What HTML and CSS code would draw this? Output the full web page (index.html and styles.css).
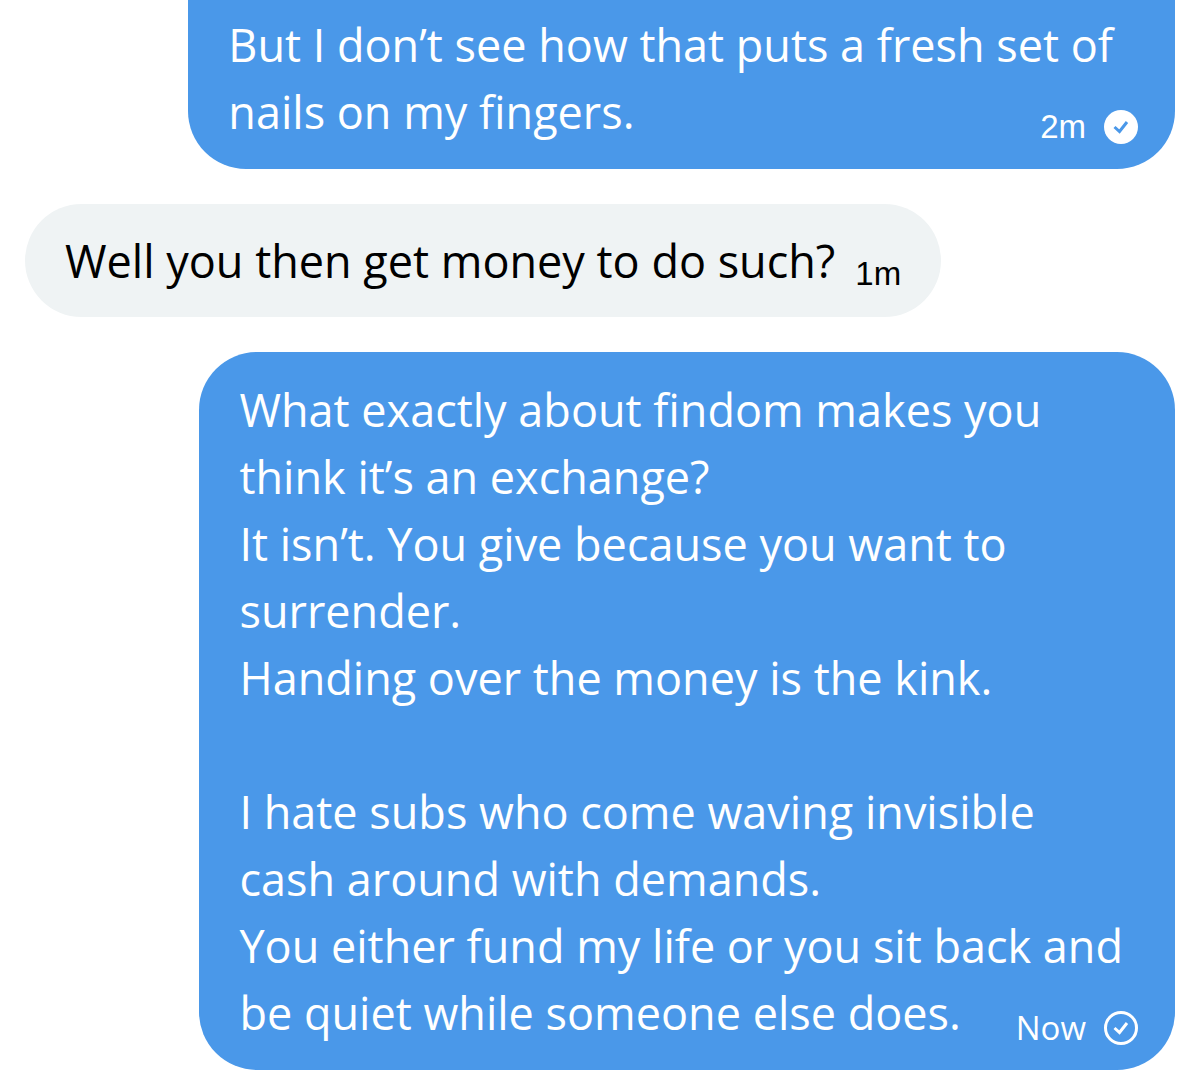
FILE: index.html
```html
<!DOCTYPE html>
<html lang="en">
<head>
    <meta charset="UTF-8">
    <meta name="viewport" content="width=device-width, initial-scale=1.0">
    <title>Messages</title>
    <link rel="stylesheet" href="styles.css">
</head>
<body>
<main class="chat">
    <article class="message sent continued">
        <p class="text">But I don’t see how that puts a fresh set of<br>nails on my fingers.</p>
        <div class="meta">
            <time class="elapsed">2m</time>
            <svg class="status" viewBox="0 0 34 34" role="img" aria-label="Read">
                <circle cx="17" cy="17" r="17" fill="#fff"/>
                <path d="M10.5 17l5 4.5 7.5-9.5" fill="none" stroke="#4a98e9" stroke-width="3"/>
            </svg>
        </div>
    </article>

    <article class="message received">
        <p class="text">Well you then get money to do such?</p>
        <div class="meta">
            <time class="elapsed">1m</time>
        </div>
    </article>

    <article class="message sent">
        <p class="text">What exactly about findom makes you<br>think it’s an exchange?<br>It isn’t. You give because you want to<br>surrender.<br>Handing over the money is the kink.<br><br>I hate subs who come waving invisible<br>cash around with demands.<br>You either fund my life or you sit back and<br>be quiet while someone else does.</p>
        <div class="meta">
            <time>Now</time>
            <svg class="status" viewBox="0 0 34 34" role="img" aria-label="Sent">
                <circle cx="17" cy="17" r="15.5" fill="none" stroke="#fff" stroke-width="3"/>
                <path d="M10.5 17l5 4.5 7.5-9.5" fill="none" stroke="#fff" stroke-width="3"/>
            </svg>
        </div>
    </article>
</main>
</body>
</html>
```
FILE: styles.css
```css
body {
    background-color: #fff;
    color: #000;
    font-family: "Open Sans", "Noto Sans", sans-serif;
    margin: 0;
}

.chat {
    display: flex;
    flex-direction: column;
    align-items: flex-start;
    gap: 35px;
    padding: 0 25px 18px;
}

.message {
    position: relative;
    box-sizing: border-box;
    border-radius: 58px;
    padding: 23px 40px;
}

.text {
    font-size: 45px;
    line-height: 67px;
    margin: 0;
    white-space: nowrap;
}

.meta {
    display: flex;
    align-items: center;
    gap: 18px;
    font-size: 33px;
    line-height: 40px;
}

.elapsed {
    font-family: "Liberation Sans", Arial, sans-serif;
}

.sent {
    align-self: flex-end;
    background-color: #4a98e9;
    color: #fff;
    padding: 24px 52px 24px 40px;
}

.sent .meta {
    position: absolute;
    right: 37px;
    bottom: 22px;
}

.continued {
    border-radius: 0 0 58px 58px;
    padding-top: 11px;
    padding-right: 62px;
}

.received {
    display: flex;
    align-items: flex-end;
    gap: 20px;
    background-color: #eff3f4;
}

.status {
    width: 34px;
    height: 34px;
}
```
